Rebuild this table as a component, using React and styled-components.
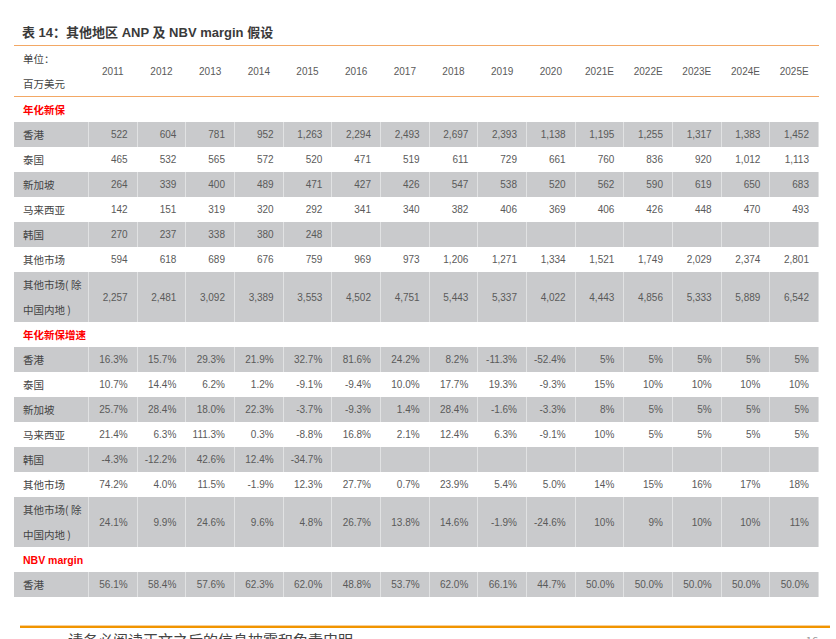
import React from 'react';
import styled, { createGlobalStyle } from 'styled-components';

const GlobalStyle = createGlobalStyle`
  html, body {
    margin: 0;
    padding: 0;
    background: #ffffff;
  }
  body {
    font-family: "Liberation Sans", "Noto Sans CJK SC", sans-serif;
    overflow: hidden;
  }
`;

const Page = styled.div`
  width: 836px;
  height: 639px;
  overflow: hidden;
  padding-left: 14px;
  box-sizing: border-box;
`;

const Title = styled.h1`
  margin: 0;
  padding: 24px 0 0 8px;
  height: 21px;
  line-height: 18px;
  font-size: 13px;
  font-weight: bold;
  color: #3a3a3a;
  font-family: "Liberation Sans", "Noto Sans CJK SC", sans-serif;
`;

const Table = styled.div`
  width: 805px;
  border-top: 1px solid #f3a865;
`;

const Row = styled.div`
  display: grid;
  grid-template-columns: 75px repeat(15, 1fr);
  height: ${(p) => (p.$tall ? 50 : 25)}px;
  background: ${(p) => (p.$shade ? '#c9cacc' : '#ffffff')};
`;

const HeaderRow = styled(Row)`
  height: 50px;
  border-bottom: 1px solid #f3a865;
`;

const Label = styled.div`
  padding-left: 9px;
  display: flex;
  flex-direction: column;
  justify-content: center;
  font-family: "Noto Sans CJK SC", sans-serif;
  font-size: 10.5px;
  line-height: 25px;
  color: #444;
  border-right: 1px solid rgba(255, 255, 255, 0.45);
  white-space: nowrap;
`;

const Cell = styled.div`
  display: flex;
  align-items: center;
  justify-content: ${(p) => (p.$center ? 'center' : 'flex-end')};
  padding-right: ${(p) => (p.$center ? 0 : 9)}px;
  font-size: 10px;
  color: #5a5a5a;
  border-right: 1px solid rgba(255, 255, 255, 0.45);
`;

const Section = styled.div`
  height: 25px;
  padding-left: 9px;
  display: flex;
  align-items: center;
  font-size: 10.5px;
  font-weight: bold;
  color: #ff0000;
  font-family: "Liberation Sans", "Noto Sans CJK SC", sans-serif;
`;

const Footer = styled.div`
  margin: 28px 0 0 6px;
  width: 810px;
  border-top: 1px solid #f8cf98;
  height: 2px;
  background: #f19500;
`;

const FooterText = styled.div`
  display: flex;
  justify-content: space-between;
  padding: 3px 18px 0 54px;
  font-family: "Noto Sans CJK SC", sans-serif;
  font-size: 15px;
  line-height: 18px;
  color: #444;
`;

const PageNo = styled.span`
  font-size: 11px;
  color: #999;
`;

const years = ['2011', '2012', '2013', '2014', '2015', '2016', '2017', '2018', '2019', '2020', '2021E', '2022E', '2023E', '2024E', '2025E'];

const blank = Array(10).fill('');

const anp = [
  ['香港', ['522', '604', '781', '952', '1,263', '2,294', '2,493', '2,697', '2,393', '1,138', '1,195', '1,255', '1,317', '1,383', '1,452']],
  ['泰国', ['465', '532', '565', '572', '520', '471', '519', '611', '729', '661', '760', '836', '920', '1,012', '1,113']],
  ['新加坡', ['264', '339', '400', '489', '471', '427', '426', '547', '538', '520', '562', '590', '619', '650', '683']],
  ['马来西亚', ['142', '151', '319', '320', '292', '341', '340', '382', '406', '369', '406', '426', '448', '470', '493']],
  ['韩国', ['270', '237', '338', '380', '248', ...blank]],
  ['其他市场', ['594', '618', '689', '676', '759', '969', '973', '1,206', '1,271', '1,334', '1,521', '1,749', '2,029', '2,374', '2,801']],
  [['其他市场( 除', '中国内地 )'], ['2,257', '2,481', '3,092', '3,389', '3,553', '4,502', '4,751', '5,443', '5,337', '4,022', '4,443', '4,856', '5,333', '5,889', '6,542']],
];

const growth = [
  ['香港', ['16.3%', '15.7%', '29.3%', '21.9%', '32.7%', '81.6%', '24.2%', '8.2%', '-11.3%', '-52.4%', '5%', '5%', '5%', '5%', '5%']],
  ['泰国', ['10.7%', '14.4%', '6.2%', '1.2%', '-9.1%', '-9.4%', '10.0%', '17.7%', '19.3%', '-9.3%', '15%', '10%', '10%', '10%', '10%']],
  ['新加坡', ['25.7%', '28.4%', '18.0%', '22.3%', '-3.7%', '-9.3%', '1.4%', '28.4%', '-1.6%', '-3.3%', '8%', '5%', '5%', '5%', '5%']],
  ['马来西亚', ['21.4%', '6.3%', '111.3%', '0.3%', '-8.8%', '16.8%', '2.1%', '12.4%', '6.3%', '-9.1%', '10%', '5%', '5%', '5%', '5%']],
  ['韩国', ['-4.3%', '-12.2%', '42.6%', '12.4%', '-34.7%', ...blank]],
  ['其他市场', ['74.2%', '4.0%', '11.5%', '-1.9%', '12.3%', '27.7%', '0.7%', '23.9%', '5.4%', '5.0%', '14%', '15%', '16%', '17%', '18%']],
  [['其他市场( 除', '中国内地 )'], ['24.1%', '9.9%', '24.6%', '9.6%', '4.8%', '26.7%', '13.8%', '14.6%', '-1.9%', '-24.6%', '10%', '9%', '10%', '10%', '11%']],
];

const margin = [
  ['香港', ['56.1%', '58.4%', '57.6%', '62.3%', '62.0%', '48.8%', '53.7%', '62.0%', '66.1%', '44.7%', '50.0%', '50.0%', '50.0%', '50.0%', '50.0%']],
];

const DataRow = ({ name, values, shade }) => {
  const lines = Array.isArray(name) ? name : [name];
  return (
    <Row $shade={shade} $tall={lines.length > 1}>
      <Label>
        {lines.map((l) => (
          <span key={l}>{l}</span>
        ))}
      </Label>
      {values.map((v, i) => (
        <Cell key={i}>{v}</Cell>
      ))}
    </Row>
  );
};

const Block = ({ title, rows }) => (
  <>
    <Section>{title}</Section>
    {rows.map(([name, values], i) => (
      <DataRow key={i} name={name} values={values} shade={i % 2 === 0} />
    ))}
  </>
);

export default function App() {
  return (
    <Page>
      <GlobalStyle />
      <Title>表 14：其他地区 ANP 及 NBV margin 假设</Title>
      <Table>
        <HeaderRow>
          <Label>
            <span>单位：</span>
            <span>百万美元</span>
          </Label>
          {years.map((y) => (
            <Cell key={y} $center>{y}</Cell>
          ))}
        </HeaderRow>
        <Block title="年化新保" rows={anp} />
        <Block title="年化新保增速" rows={growth} />
        <Block title="NBV margin" rows={margin} />
      </Table>
      <Footer />
      <FooterText>
        <span>请务必阅读正文之后的信息披露和免责申明</span>
        <PageNo>16</PageNo>
      </FooterText>
    </Page>
  );
}
